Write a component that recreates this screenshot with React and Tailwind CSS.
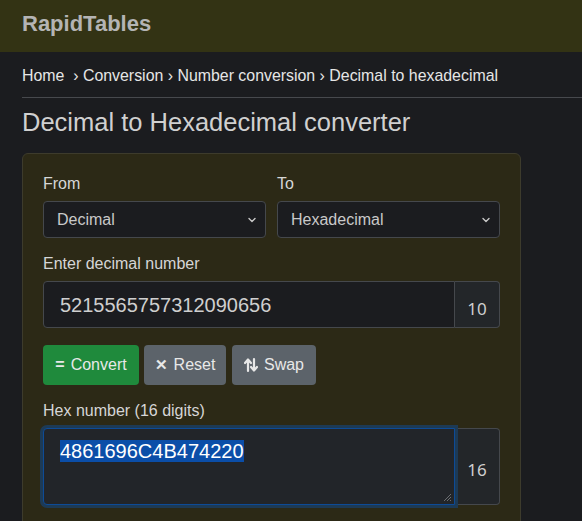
import React from "react";

function Chevron() {
  return (
    <svg width="8" height="6" viewBox="0 0 8 6" className="absolute right-[9px] top-1/2 -translate-y-1/2">
      <path d="M1 1.5 L4 4.5 L7 1.5" fill="none" stroke="#c8c8c8" strokeWidth="1.4" strokeLinecap="round" strokeLinejoin="round" />
    </svg>
  );
}

function Select({ value }) {
  return (
    <div className="relative h-[37px] w-[223px] rounded-[4px] border border-[#45484c] bg-[#1b1c1f] flex items-center pl-[13px] text-[16px] text-[#c9c9c9]">
      {value}
      <Chevron />
    </div>
  );
}

export default function App() {
  return (
    <div className="h-[521px] w-[582px] overflow-hidden bg-[#1b1c1f] text-[#dedede]" style={{ fontFamily: '"Liberation Sans", Arial, sans-serif' }}>
      <div className="h-[52px] bg-[#333314] flex items-center px-[22px]">
        <span className="text-[22px] font-bold text-[#b4b4b4] -mt-[6px]">RapidTables</span>
      </div>
      <div className="pl-[22px]">
        <div className="h-[46px] flex items-center border-b border-[#47494d] text-[15.9px] text-[#e6e6e6] whitespace-nowrap pt-[3px]">
          Home&nbsp; › Conversion › Number conversion › Decimal to hexadecimal
        </div>
        <h1 className="mt-[8px] text-[25.5px] leading-[32px] text-[#d0d0d0] whitespace-nowrap">Decimal to Hexadecimal converter</h1>
        <div className="mt-[15px] w-[499px] h-[400px] rounded-[6px] border border-[#3d3b2c] bg-[#2c2916] px-[20px] pt-[21px]">
          <div className="flex gap-[11px]">
            <div>
              <div className="text-[16px] leading-[18px] text-[#d6d6d6] mb-[8px]">From</div>
              <Select value="Decimal" />
            </div>
            <div>
              <div className="text-[16px] leading-[18px] text-[#d6d6d6] mb-[8px]">To</div>
              <Select value="Hexadecimal" />
            </div>
          </div>
          <div className="mt-[17px] text-[16px] leading-[18px] text-[#d6d6d6]">Enter decimal number</div>
          <div className="mt-[8px] flex h-[47px] w-[457px]">
            <div className="flex-1 rounded-l-[4px] border border-[#45484c] bg-[#1b1c1f] flex items-center pl-[16px] text-[20px] text-[#cfcfcf]">
              5215565757312090656
            </div>
            <div className="w-[45px] rounded-r-[4px] border border-l-0 border-[#45484c] bg-[#232629] flex items-center justify-center pt-[9px] text-[17px] text-[#cfcfcf]" style={{ fontFamily: '"Noto Sans", sans-serif' }}>
              10
            </div>
          </div>
          <div className="mt-[17px] flex h-[40px]">
            <button className="w-[96px] rounded-[4px] bg-[#1f8a3c] text-[16px] text-[#e8e8e8] flex items-center justify-center gap-[6px]">
              <span className="font-bold">=</span>Convert
            </button>
            <button className="ml-[5px] w-[82px] rounded-[4px] bg-[#5c636a] text-[16px] text-[#e8e8e8] flex items-center justify-center gap-[6px]">
              <span className="font-bold text-[15px]">✕</span>Reset
            </button>
            <button className="ml-[6px] w-[84px] rounded-[4px] bg-[#5c636a] text-[16px] text-[#e8e8e8] flex items-center justify-center gap-[6px]">
              <svg width="14" height="16" viewBox="0 0 14 16">
                <path d="M4 14 V3 M1 6 L4 2.5 L7 6" fill="none" stroke="#e8e8e8" strokeWidth="2.2" strokeLinecap="round" strokeLinejoin="round" />
                <path d="M10 2 V13 M7 10 L10 13.5 L13 10" fill="none" stroke="#e8e8e8" strokeWidth="2.2" strokeLinecap="round" strokeLinejoin="round" />
              </svg>
              Swap
            </button>
          </div>
          <div className="mt-[17px] text-[16px] leading-[18px] text-[#d6d6d6]">Hex number (16 digits)</div>
          <div className="mt-[8px] flex h-[77px] w-[457px]">
            <div className="relative flex-1 rounded-l-[4px] border border-[#0d4b96] bg-[#222529] pl-[16px] pt-[10px] text-[20px] leading-[24px] text-[#eaeaea] shadow-[0_0_0_3px_#1d3a55]">
              <span className="bg-[#0b4ea8] text-white">4861696C4B474220</span>
              <svg width="10" height="10" viewBox="0 0 10 10" className="absolute right-[2px] bottom-[2px]">
                <path d="M9 2 L2 9 M9 5 L5 9 M9 8 L8 9" stroke="#6a6d70" strokeWidth="1" />
              </svg>
            </div>
            <div className="w-[45px] rounded-r-[4px] border border-l-0 border-[#45484c] bg-[#232629] flex items-center justify-center pt-[6px] text-[17px] text-[#cfcfcf]" style={{ fontFamily: '"Noto Sans", sans-serif' }}>
              16
            </div>
          </div>
        </div>
      </div>
    </div>
  );
}
